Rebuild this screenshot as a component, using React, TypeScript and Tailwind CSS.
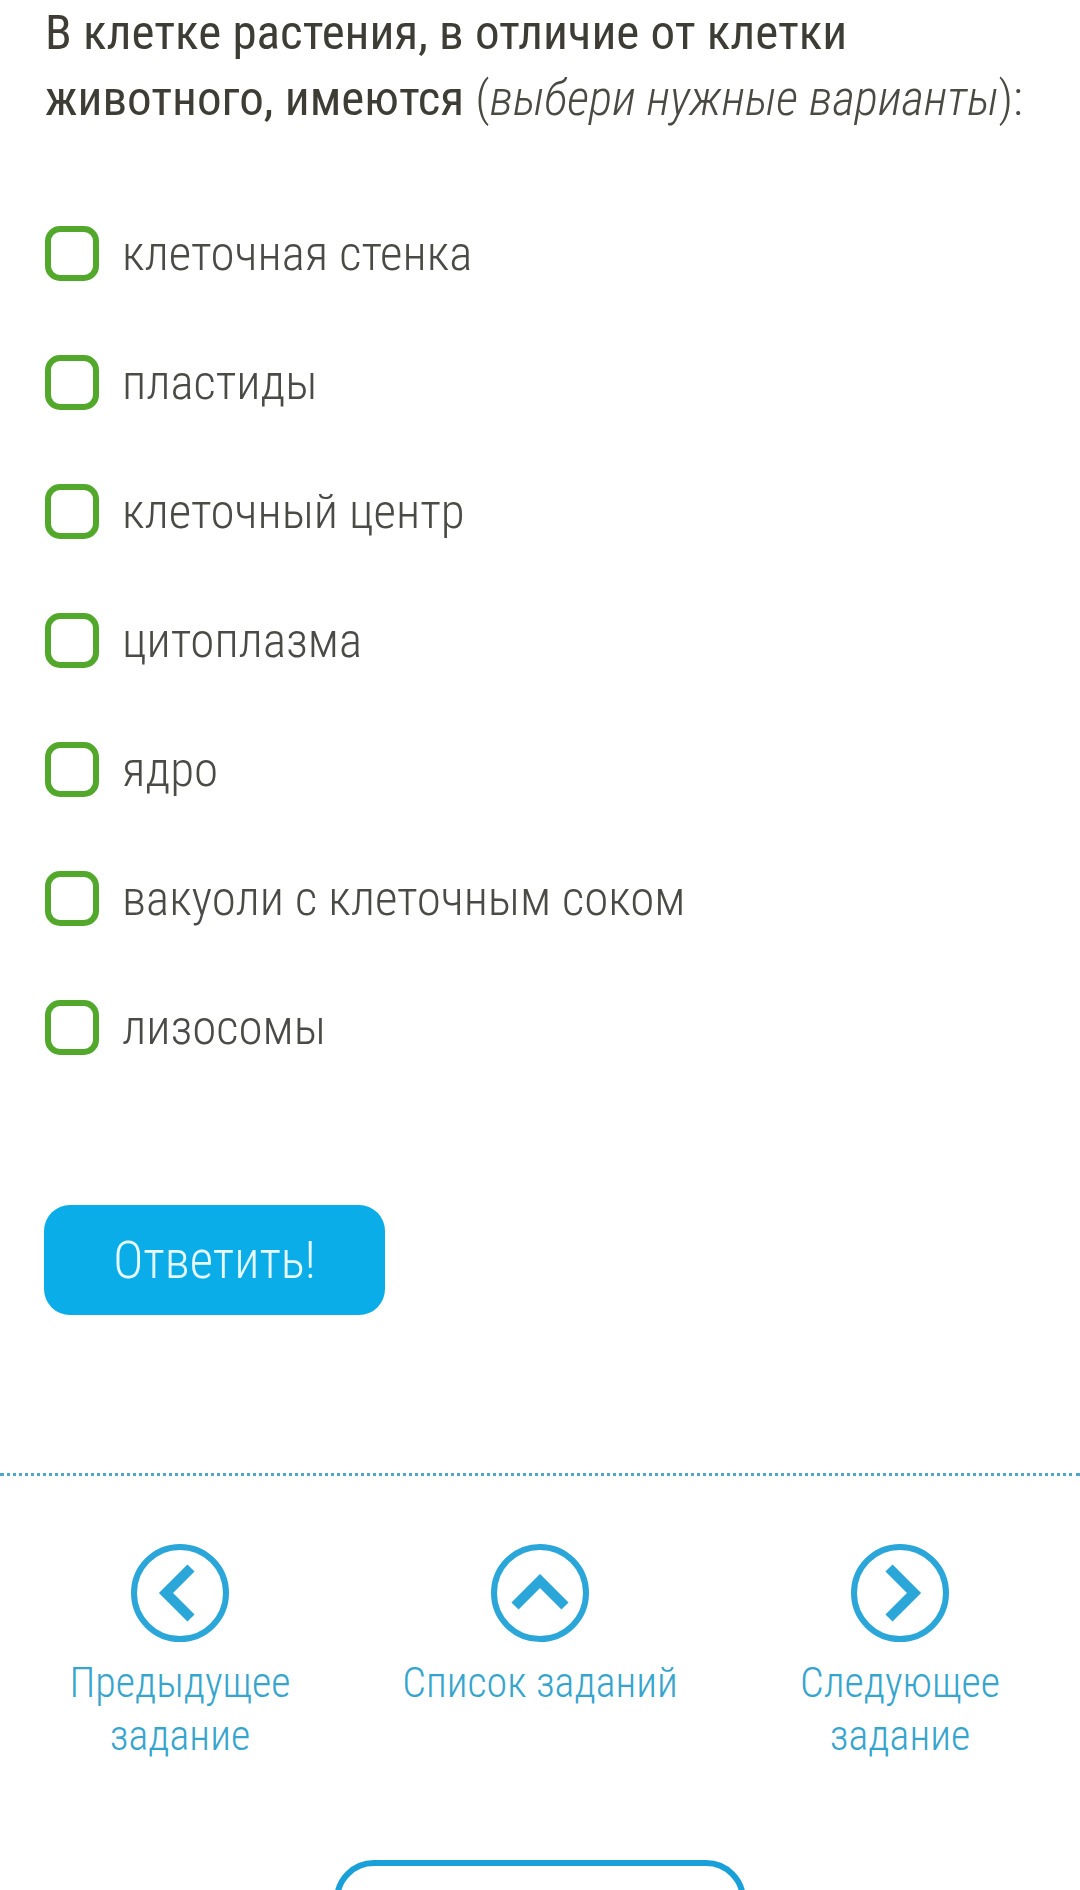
import React from "react";

const options = [
  "клеточная стенка",
  "пластиды",
  "клеточный центр",
  "цитоплазма",
  "ядро",
  "вакуоли с клеточным соком",
  "лизосомы",
];

function Chevron({ dir }: { dir: "left" | "up" | "right" }) {
  const d =
    dir === "left"
      ? "M61 25 L36 50 L61 75"
      : dir === "right"
      ? "M39 25 L64 50 L39 75"
      : "M25 63 L50 38 L75 63";
  return (
    <svg width="100" height="100" viewBox="0 0 100 100">
      <circle cx="50" cy="50" r="46" fill="none" stroke="#2ba6d9" strokeWidth="6" />
      <path d={d} fill="none" stroke="#2ba6d9" strokeWidth="10" strokeLinejoin="miter" strokeLinecap="butt" />
    </svg>
  );
}

export default function App() {
  return (
    <div className="w-[1080px] h-[1890px] overflow-hidden bg-white font-['Roboto',sans-serif] [font-stretch:condensed]">
      <div className="px-[45px] pt-0">
        <h1 className="text-[49px] leading-[66px] font-normal text-[#3d3c35]">
          В клетке растения, в отличие от клетки животного, имеются{" "}
          <span className="font-light text-[#4a4943]">
            (<i>выбери нужные варианты</i>):
          </span>
        </h1>
      </div>

      <div className="mt-[94px] px-[45px] flex flex-col gap-[74px]">
        {options.map((o) => (
          <label key={o} className="flex items-center h-[55px]">
            <span className="w-[54px] h-[55px] rounded-[15px] border-[6px] border-[#52a82a] shrink-0" />
            <span className="ml-[23px] text-[49px] font-light text-[#4a4a46] leading-none">{o}</span>
          </label>
        ))}
      </div>

      <div className="px-[44px] mt-[150px]">
        <button className="w-[341px] h-[110px] rounded-[26px] bg-[#0aade8] text-[#e6faff] text-[51px] font-light leading-none">
          Ответить!
        </button>
      </div>

      <div className="mt-[158px] border-t-[3px] border-dotted border-[#4ea6c9]" />

      <div className="grid grid-cols-3 mt-[67px] text-[#36a5cd] text-[42px] font-light leading-[53px] text-center">
        <div className="flex flex-col items-center">
          <Chevron dir="left" />
          <div className="mt-[13px]">Предыдущее<br />задание</div>
        </div>
        <div className="flex flex-col items-center">
          <Chevron dir="up" />
          <div className="mt-[13px]">Список заданий</div>
        </div>
        <div className="flex flex-col items-center">
          <Chevron dir="right" />
          <div className="mt-[13px]">Следующее<br />задание</div>
        </div>
      </div>

      <div className="flex justify-center mt-[98px]">
        <div className="w-[412px] h-[120px] rounded-[40px] border-[6px] border-[#1aa0d8]" />
      </div>
    </div>
  );
}
